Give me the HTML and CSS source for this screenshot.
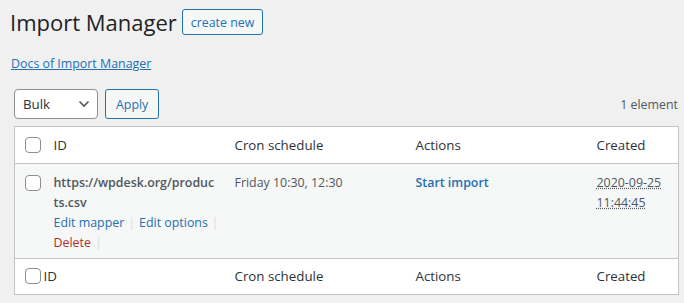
FILE: index.html
```html
<!DOCTYPE html>
<html>
<head>
<meta charset="utf-8">
<link rel="stylesheet" href="styles.css">
</head>
<body>
<div class="wrap">
  <div class="title-row">
    <h1 class="title">Import Manager</h1>
    <a class="btn create">create new</a>
  </div>
  <p class="docs"><a href="#">Docs of Import Manager</a></p>
  <div class="tablenav">
    <div class="bulk">
      <div class="select">Bulk
        <svg class="chev" width="12" height="8" viewBox="0 0 12 8"><path d="M1.5 1.5 L6 6 L10.5 1.5" fill="none" stroke="#50575e" stroke-width="1.6"/></svg>
      </div>
      <a class="btn apply">Apply</a>
    </div>
    <div class="count">1 element</div>
  </div>
  <table class="list">
    <colgroup>
      <col class="c-cb"><col class="c-id"><col class="c-cron"><col class="c-act"><col class="c-cr">
    </colgroup>
    <thead>
      <tr>
        <th class="cb"><span class="box"></span></th>
        <th>ID</th>
        <th>Cron schedule</th>
        <th>Actions</th>
        <th>Created</th>
      </tr>
    </thead>
    <tbody>
      <tr>
        <td class="cb"><span class="box body-box"></span></td>
        <td class="idcell">
          <strong class="url">https://wpdesk.org/products.csv</strong>
          <div class="row-actions"><span class="nowrap"><a href="#">Edit mapper</a><span class="sep">|</span><a href="#">Edit options</a><span class="sep">|</span></span><br><a href="#" class="del">Delete</a><span class="sep">|</span></div>
        </td>
        <td>Friday 10:30, 12:30</td>
        <td><a href="#" class="start">Start import</a></td>
        <td><abbr class="date">2020-09-25 11:44:45</abbr></td>
      </tr>
    </tbody>
    <tfoot>
      <tr>
        <th class="cb foot"><span class="box"></span></th>
        <th class="footid">ID</th>
        <th>Cron schedule</th>
        <th>Actions</th>
        <th>Created</th>
      </tr>
    </tfoot>
  </table>
</div>
</body>
</html>
```
FILE: styles.css
```css
html, body {
  margin: 0;
  padding: 0;
  background: #f0f0f1;
}
body {
  font-family: "Open Sans", "Noto Sans", sans-serif;
  font-size: 12.4px;
  color: #3c434a;
}
.wrap {
  padding: 9px 6px 0 14px;
}
.title-row {
  display: flex;
  align-items: center;
  margin-left: -4px;
}
.title {
  font-size: 22px;
  font-weight: 400;
  color: #1d2327;
  margin: 0;
  line-height: 26px;
}
.btn {
  display: inline-flex;
  align-items: center;
  border: 1px solid #2271b1;
  border-radius: 3px;
  color: #2271b1;
  background: #f6f7f7;
  font-size: 12.4px;
  box-sizing: border-box;
}
.create {
  margin-left: 5px;
  height: 26px;
  padding: 0 8px;
}
.docs {
  margin: 19px 0 0 -3px;
  line-height: 19px;
}
.docs a {
  color: #2271b1;
  text-decoration: underline;
}
.tablenav {
  display: flex;
  justify-content: space-between;
  align-items: center;
  margin-top: 16px;
  height: 30px;
}
.bulk {
  display: flex;
  gap: 7px;
}
.select {
  width: 84px;
  height: 30px;
  box-sizing: border-box;
  border: 1px solid #8c8f94;
  border-radius: 4px;
  background: #fff;
  padding: 0 8px;
  display: flex;
  align-items: center;
  justify-content: space-between;
  font-size: 13.3px;
  color: #2c3338;
}
.chev { margin-right: -1px; }
.apply {
  height: 30px;
  padding: 0 10px;
}
.count {
  color: #50575e;
}
.list {
  margin-top: 7px;
  width: 664px;
  border-collapse: collapse;
  table-layout: fixed;
  background: #fff;
  border: 1px solid #c3c4c7;
}
.c-cb { width: 29px; }
.c-id { width: 181px; }
.c-cron { width: 181px; }
.c-act { width: 181px; }
.c-cr { width: 92px; }
th, td {
  text-align: left;
  font-weight: 400;
  vertical-align: top;
  padding: 8px 10px;
}
thead th, tfoot th {
  font-size: 13.3px;
  color: #2c3338;
  line-height: 19px;
}
thead tr { height: 36px; }
thead th { border-bottom: 1px solid #c3c4c7; padding-top: 9px; }
tfoot th { border-top: 1px solid #c3c4c7; padding-top: 8px; }
tfoot tr { height: 34px; }
tbody tr { background: #f6f7f7; height: 94px; }
tbody td {
  font-size: 12.4px;
  line-height: 19.5px;
  color: #50575e;
  padding-top: 9px;
  padding-bottom: 6px;
}
th.cb, td.cb {
  padding: 10px 0 0 10px;
}
td.cb { padding-top: 11px; }
th.cb.foot { padding-top: 9px; }
.box {
  display: block;
  width: 16px;
  height: 16px;
  box-sizing: border-box;
  border: 1px solid #8c8f94;
  border-radius: 4px;
  background: #fff;
}
.footid { padding-left: 0; }
.url {
  display: block;
  font-size: 12.4px;
  font-weight: 600;
  color: #50575e;
  word-break: break-all;
  line-height: 19.5px;
}
.row-actions {
  padding-top: 1px;
  font-size: 12.4px;
  line-height: 19.5px;
}
.nowrap { white-space: nowrap; }
.row-actions a { color: #2271b1; text-decoration: none; }
.row-actions a.del { color: #b32d2e; }
.sep { color: #dcdcde; margin: 0 4px 0 4px; }
.start { color: #2271b1; text-decoration: none; font-weight: 600; }
.date {
  text-decoration: underline dotted;
  color: #50575e;
}
```
